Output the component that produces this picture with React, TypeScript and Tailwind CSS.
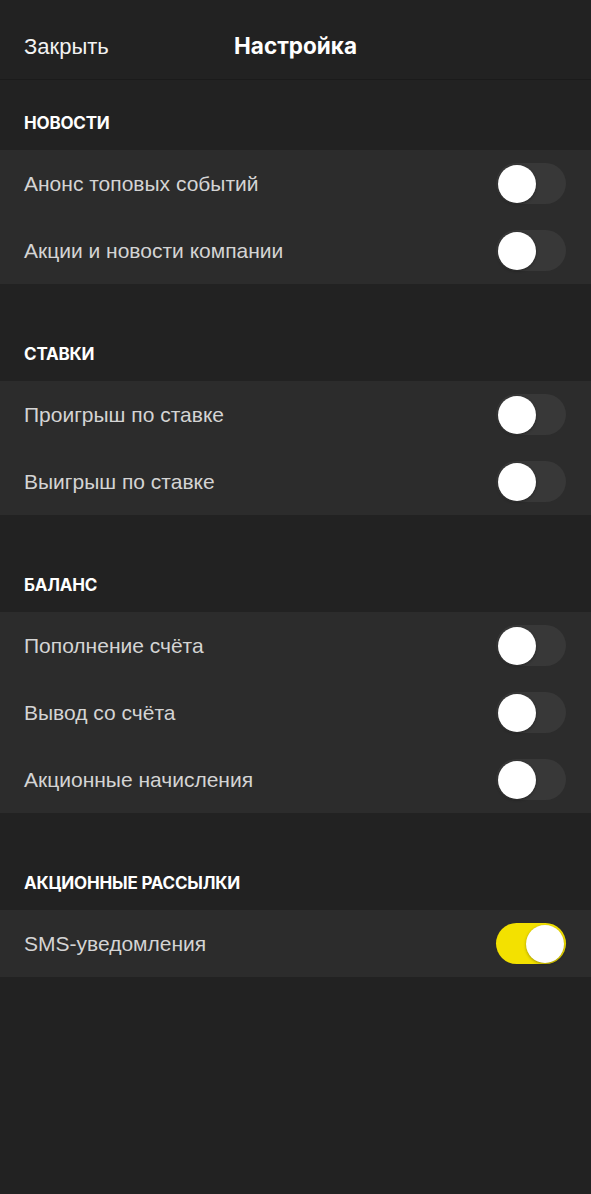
import React, { useState } from "react";

type Item = { label: string; on: boolean };
type Section = { title: string; items: Item[] };

const initial: Section[] = [
  {
    title: "Новости",
    items: [
      { label: "Анонс топовых событий", on: false },
      { label: "Акции и новости компании", on: false },
    ],
  },
  {
    title: "Ставки",
    items: [
      { label: "Проигрыш по ставке", on: false },
      { label: "Выигрыш по ставке", on: false },
    ],
  },
  {
    title: "Баланс",
    items: [
      { label: "Пополнение счёта", on: false },
      { label: "Вывод со счёта", on: false },
      { label: "Акционные начисления", on: false },
    ],
  },
  {
    title: "Акционные рассылки",
    items: [{ label: "SMS-уведомления", on: true }],
  },
];

function Toggle({ on, onClick }: { on: boolean; onClick: () => void }) {
  return (
    <button
      onClick={onClick}
      className={`relative w-[70px] h-[41px] rounded-full p-[2px] flex items-center ${
        on ? "bg-[#f3e100] justify-end" : "bg-[#383838] justify-start"
      }`}
    >
      <span className="w-[38px] h-[38px] rounded-full bg-white shadow-[0_1px_3px_rgba(0,0,0,0.35)]" />
    </button>
  );
}

export default function App() {
  const [sections, setSections] = useState(initial);

  const flip = (si: number, ii: number) => {
    setSections((prev) =>
      prev.map((s, a) =>
        a !== si
          ? s
          : { ...s, items: s.items.map((it, b) => (b === ii ? { ...it, on: !it.on } : it)) }
      )
    );
  };

  return (
    <div className="min-h-[1194px] w-full bg-[#222222] font-['Liberation_Sans',Arial,sans-serif]">
      {/* Header */}
      <header className="relative h-[80px] flex items-center px-6 pt-[14px] border-b border-[#1b1b1b]">
        <button className="text-[22px] text-[#f2f2f2] leading-none">Закрыть</button>
        <h1 className="absolute left-0 right-0 top-[14px] bottom-0 flex items-center justify-center pointer-events-none font-['Inter',sans-serif] font-bold text-[22.5px] text-white leading-none">
          Настройка
        </h1>
      </header>

      {sections.map((s, si) => (
        <section key={s.title} className={si === 0 ? "" : "mt-[27px]"}>
          <div className="h-[70px] flex items-end px-6 pb-[18px]">
            <h2 className="font-['Inter',sans-serif] font-bold uppercase text-[17px] text-white tracking-[-0.2px] leading-none">
              {s.title}
            </h2>
          </div>
          <div className="bg-[#2c2c2c]">
            {s.items.map((it, ii) => (
              <div key={it.label} className="h-[67px] flex items-center justify-between pl-6 pr-[25px]">
                <span className="text-[21px] text-[#d4d4d4] leading-none">{it.label}</span>
                <Toggle on={it.on} onClick={() => flip(si, ii)} />
              </div>
            ))}
          </div>
        </section>
      ))}
    </div>
  );
}
